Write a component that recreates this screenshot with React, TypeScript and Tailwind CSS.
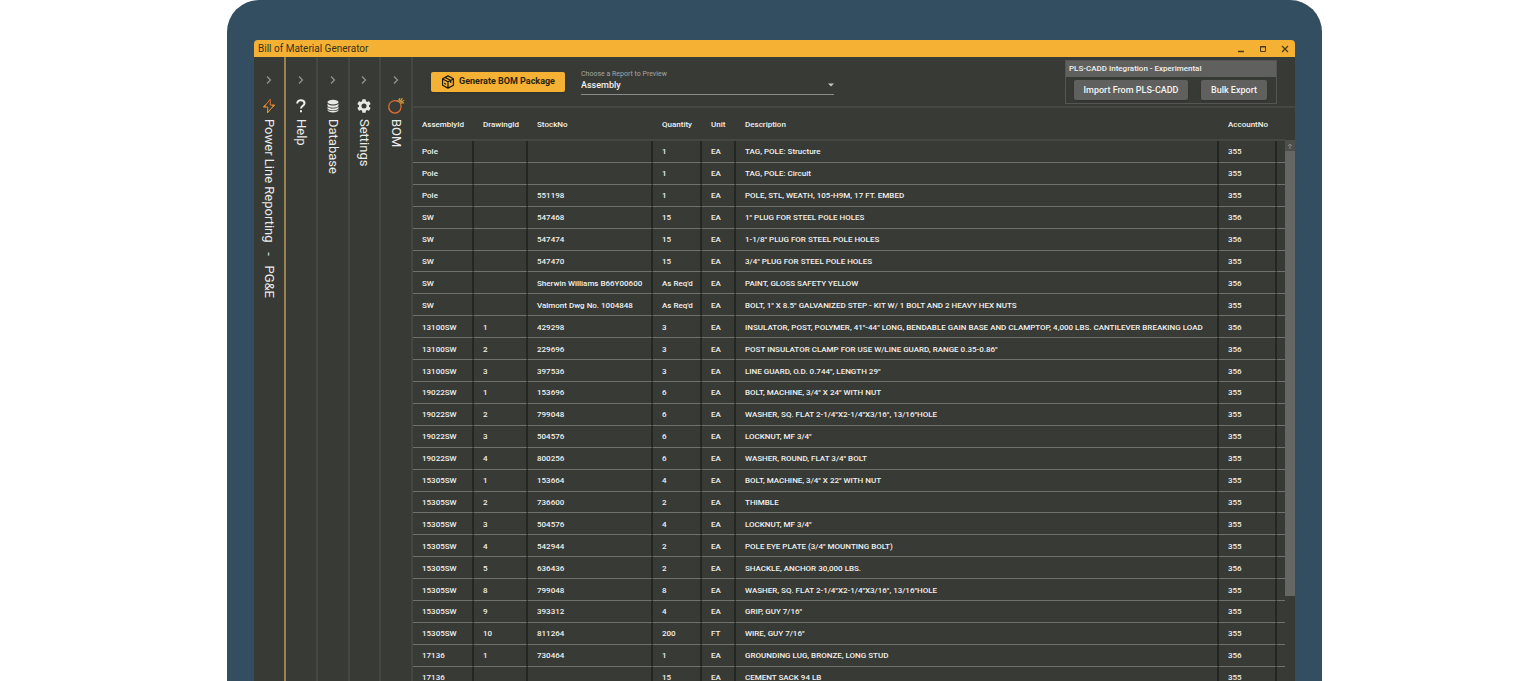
import type { ReactNode } from "react";

type Row = [string, string, string, string, string, string, string];

const columns = ["AssemblyId", "DrawingId", "StockNo", "Quantity", "Unit", "Description", "AccountNo"];

const rows: Row[] = [
  ["Pole", "", "", "1", "EA", "TAG, POLE: Structure", "355"],
  ["Pole", "", "", "1", "EA", "TAG, POLE: Circuit", "355"],
  ["Pole", "", "551198", "1", "EA", "POLE, STL, WEATH, 105-H9M, 17 FT. EMBED", "355"],
  ["SW", "", "547468", "15", "EA", "1\" PLUG FOR STEEL POLE HOLES", "356"],
  ["SW", "", "547474", "15", "EA", "1-1/8\" PLUG FOR STEEL POLE HOLES", "356"],
  ["SW", "", "547470", "15", "EA", "3/4\" PLUG FOR STEEL POLE HOLES", "355"],
  ["SW", "", "Sherwin Williams B66Y00600", "As Req'd", "EA", "PAINT, GLOSS SAFETY YELLOW", "356"],
  ["SW", "", "Valmont Dwg No. 1004848", "As Req'd", "EA", "BOLT, 1\" X 8.5\" GALVANIZED STEP - KIT W/ 1 BOLT AND 2 HEAVY HEX NUTS", "355"],
  ["13100SW", "1", "429298", "3", "EA", "INSULATOR, POST, POLYMER, 41\"-44\" LONG, BENDABLE GAIN BASE AND CLAMPTOP, 4,000 LBS. CANTILEVER BREAKING LOAD", "356"],
  ["13100SW", "2", "229696", "3", "EA", "POST INSULATOR CLAMP FOR USE W/LINE GUARD, RANGE 0.35-0.86\"", "356"],
  ["13100SW", "3", "397536", "3", "EA", "LINE GUARD, O.D. 0.744\", LENGTH 29\"", "356"],
  ["19022SW", "1", "153696", "6", "EA", "BOLT, MACHINE, 3/4\" X 24\" WITH NUT", "355"],
  ["19022SW", "2", "799048", "6", "EA", "WASHER, SQ. FLAT 2-1/4\"X2-1/4\"X3/16\", 13/16\"HOLE", "355"],
  ["19022SW", "3", "504576", "6", "EA", "LOCKNUT, MF 3/4\"", "355"],
  ["19022SW", "4", "800256", "6", "EA", "WASHER, ROUND, FLAT 3/4\" BOLT", "355"],
  ["15305SW", "1", "153664", "4", "EA", "BOLT, MACHINE, 3/4\" X 22\" WITH NUT", "355"],
  ["15305SW", "2", "736600", "2", "EA", "THIMBLE", "355"],
  ["15305SW", "3", "504576", "4", "EA", "LOCKNUT, MF 3/4\"", "355"],
  ["15305SW", "4", "542944", "2", "EA", "POLE EYE PLATE (3/4\" MOUNTING BOLT)", "355"],
  ["15305SW", "5", "636436", "2", "EA", "SHACKLE, ANCHOR 30,000 LBS.", "356"],
  ["15305SW", "8", "799048", "8", "EA", "WASHER, SQ. FLAT 2-1/4\"X2-1/4\"X3/16\", 13/16\"HOLE", "355"],
  ["15305SW", "9", "393312", "4", "EA", "GRIP, GUY 7/16\"", "355"],
  ["15305SW", "10", "811264", "200", "FT", "WIRE, GUY 7/16\"", "355"],
  ["17136", "1", "730464", "1", "EA", "GROUNDING LUG, BRONZE, LONG STUD", "356"],
  ["17136", "", "", "15", "EA", "CEMENT SACK 94 LB", "355"],
];

function BoltIcon() {
  return (
    <svg viewBox="0 0 14 16" className="h-4 w-3.5" fill="none" strokeWidth="1" strokeLinejoin="round">
      <defs>
        <linearGradient id="bolt" x1="0" y1="0" x2="0" y2="1">
          <stop offset="0" stopColor="#d9632c" />
          <stop offset="1" stopColor="#efaf35" />
        </linearGradient>
      </defs>
      <path d="M8.300 1.200 2.200 8.800 5.800 9 5.600 14.800 11.800 7.300 8.200 7Z" stroke="url(#bolt)" />
      <path d="M3.600 6.600 1.200 8.900H4M10 7.100H12.800L10.500 9.600" stroke="#e88a30" />
    </svg>
  );
}

function HelpIcon() {
  return (
    <svg viewBox="0 0 12 16" className="h-4 w-3" fill="none" stroke="#eeeeec" strokeWidth="2">
      <path d="M2.200 5.400C2.200 3.200 3.800 2.200 5.800 2.200S9.500 3.400 9.500 5.200C9.500 7.700 6 7.700 6 10.600" />
      <path d="M5 12.200h2v2H5z" fill="#eeeeec" stroke="none" />
    </svg>
  );
}

function DatabaseIcon() {
  return (
    <svg viewBox="0 0 14 16" className="h-4 w-3.5" fill="#e8e8e6">
      <ellipse cx="7" cy="4.100" rx="5.500" ry="2.300" />
      <path d="M1.500 5.500c1 1.600 3 2 5.500 2s4.500-.4 5.500-2v1.700C12.500 8.900 10 9.700 7 9.700S1.500 8.900 1.500 7.200Z" />
      <path d="M1.500 8.500c1 1.500 3 2 5.500 2s4.500-.5 5.500-2v1.500c0 1.700-2.500 2.400-5.500 2.400S1.500 11.700 1.500 10Z" />
      <path d="M1.500 11.200c1 1.500 3 1.900 5.500 1.900s4.500-.4 5.500-1.900v.9c0 1.700-2.500 2.400-5.500 2.400s-5.500-.7-5.500-2.400Z" />
    </svg>
  );
}

function GearIcon() {
  return (
    <svg viewBox="2 2 20 20" className="h-3.5 w-3.5" fill="#e8e8e6">
      <path d="M19.140 12.940c.040-.300.060-.610.060-.940 0-.320-.020-.640-.070-.940l2.030-1.580a.490.490 0 0 0 .120-.610l-1.920-3.320a.488.488 0 0 0-.590-.220l-2.390.960c-.500-.380-1.030-.700-1.620-.940l-.360-2.540a.484.484 0 0 0-.480-.410h-3.840c-.240 0-.430.170-.470.410l-.360 2.540c-.590.240-1.130.570-1.620.940l-2.390-.960a.480.480 0 0 0-.590.220L2.740 8.870c-.120.210-.080.470.120.610l2.030 1.580c-.050.300-.090.630-.090.940s.020.640.070.940l-2.030 1.580a.490.490 0 0 0-.120.610l1.920 3.320c.120.220.370.290.590.220l2.390-.960c.500.380 1.030.700 1.620.940l.360 2.540c.050.240.240.410.480.410h3.840c.240 0 .440-.170.470-.410l.360-2.540c.590-.240 1.130-.560 1.620-.940l2.390.960c.220.080.470 0 .590-.220l1.920-3.320a.480.480 0 0 0-.120-.610l-2.010-1.580ZM12 15.600A3.600 3.600 0 1 1 12 8.400a3.600 3.600 0 0 1 0 7.200Z" />
    </svg>
  );
}

function BombIcon() {
  return (
    <svg viewBox="0 0 18 18" className="h-[18px] w-[18px]" fill="none" strokeLinecap="round">
      <path d="M10.700 4.300A6.200 6.200 0 1 0 13.700 7.600" stroke="#dd6c31" strokeWidth="1.300" />
      <path d="M10.800 4 13.800 7 15.300 5.500 12.300 2.500Z" fill="#a57a33" stroke="#d99a36" strokeWidth="0.800" />
      <path d="M14 4 15.200 1.300M14.800 4.600 17 3.500M12.800 3V1.400M15.300 5.800 16.800 6" stroke="#e5ab35" strokeWidth="1" />
    </svg>
  );
}

function PackageIcon() {
  return (
    <svg viewBox="0 0 16 16" className="h-3.5 w-3.5 shrink-0" fill="none" stroke="#1d1a0d" strokeWidth="1.400" strokeLinejoin="round">
      <path d="M8 1 14.200 4.300V11.700L8 15 1.800 11.700V4.300ZM1.800 4.500 8 7.700 14.200 4.500M8 7.700V15M4.800 2.800 11.200 6.200V9M3.800 9.500 5.800 10.600" />
    </svg>
  );
}

function SideTab({ icon, label, active = false }: { icon: ReactNode; label: string; active?: boolean }) {
  return (
    <button
      type="button"
      className={
        active
          ? "flex h-full w-8 shrink-0 flex-col items-center border-r-2 border-[#9b8150] pt-[18px] text-[#ececea]"
          : "flex h-full min-w-0 flex-1 flex-col items-center border-r-2 border-[#454743] pt-[18px] text-[#ececea]"
      }
    >
      <svg viewBox="0 0 8 10" className="h-2.5 w-2" fill="none" stroke="#969794" strokeWidth="1.200">
        <path d="M2 1.500 5.500 5 2 8.500" />
      </svg>
      <span className="mt-3 flex h-[18px] items-center">{icon}</span>
      <span className="mt-1 text-[13px] leading-4 whitespace-pre [writing-mode:vertical-rl]">{label}</span>
    </button>
  );
}

function TitleBar() {
  return (
    <header className="flex h-[17px] shrink-0 items-center justify-between rounded-t-sm bg-[#f4b133] pr-[5px] pl-1">
      <h1 className="text-[10px] leading-[14px] text-[#3b321b]">Bill of Material Generator</h1>
      <div className="flex h-4 items-center gap-3 text-[#493a17]">
        <button type="button" aria-label="Minimize">
          <svg viewBox="0 0 10 10" className="h-2.5 w-2.5" stroke="currentColor" strokeWidth="1.500"><path d="M2 7.500h6" /></svg>
        </button>
        <button type="button" aria-label="Maximize">
          <svg viewBox="0 0 10 10" className="h-2.5 w-2.5" fill="none" stroke="currentColor"><path d="M2.500 2.500h5v5h-5zM2 3h6" /></svg>
        </button>
        <button type="button" aria-label="Close">
          <svg viewBox="0 0 10 10" className="h-2.5 w-2.5" stroke="currentColor" strokeWidth="1.200"><path d="m2 2 6 6M8 2 2 8" /></svg>
        </button>
      </div>
    </header>
  );
}

function Toolbar() {
  return (
    <div className="flex h-[51px] shrink-0 items-start border-b-2 border-[#454743] px-[18px]">
      <button
        type="button"
        className="mt-[15px] flex h-5 w-[134px] shrink-0 items-center justify-center gap-1 rounded-xs bg-[#f4b133] text-[9px] font-bold whitespace-nowrap text-[#29240f] shadow-sm"
      >
        <PackageIcon />
        Generate BOM Package
      </button>
      <div className="relative mt-3 ml-4 w-[253px]">
        <label htmlFor="report" className="block text-[7px] leading-[10px] text-[#a5a6a3]">Choose a Report to Preview</label>
        <select
          id="report"
          defaultValue="Assembly"
          className="block h-4 w-full appearance-none border-b border-[#8b8c89] bg-transparent pt-px pb-1 text-[9px] leading-[10px] font-medium text-[#f1f1ef]"
        >
          <option>Assembly</option>
        </select>
        <svg viewBox="0 0 6 4" className="pointer-events-none absolute right-0 bottom-2 h-1 w-1.5" fill="#c4c5c2"><path d="M0 .5h6L3 3.500Z" /></svg>
      </div>
      <section className="mt-[3px] ml-auto w-[212px] border border-[#555653]">
        <h2 className="h-4 bg-[#60605f] pl-[3px] text-[8px] leading-4 font-medium text-[#f1f1ef]">PLS-CADD Integration - Experimental</h2>
        <div className="flex h-[26px] items-start justify-between pt-[3px] pr-[9px] pl-2 text-[9px] font-medium text-[#f4f4f2]">
          <button type="button" className="h-5 w-[114px] rounded-xs bg-[#60605f] pt-px shadow-sm">Import From PLS-CADD</button>
          <button type="button" className="h-5 w-[66px] rounded-xs bg-[#60605f] pt-px shadow-sm">Bulk Export</button>
        </div>
      </section>
    </div>
  );
}

function BomTable() {
  return (
    <div className="flex min-h-0 flex-1 overflow-hidden">
      <table className="h-[581px] min-w-0 flex-1 table-fixed border-separate border-spacing-0 text-left text-[8px] leading-3 font-medium text-[#f1f1ef]">
        <colgroup>
          <col className="w-[61px]" />
          <col className="w-[54px]" />
          <col className="w-[125px]" />
          <col className="w-[49px]" />
          <col className="w-[34px]" />
          <col />
          <col className="w-[58px]" />
          <col className="w-2" />
        </colgroup>
        <thead>
          <tr>
            {columns.map((name) => (
              <th key={name} scope="col" className="h-[33px] border-b-2 border-[#454743] pt-0.5 pl-[9px] font-medium whitespace-nowrap">{name}</th>
            ))}
            <td className="border-b-2 border-[#454743]" />
          </tr>
        </thead>
        <tbody>
          {rows.map((row, index) => (
            <tr key={index}>
              {row.map((cell, column) => (
                <td key={column} className="overflow-hidden border-r-2 border-b border-r-[#242622] border-b-[#70716e] pt-0.5 pl-[9px] whitespace-nowrap">{cell}</td>
              ))}
              <td className="border-b border-[#70716e]" />
            </tr>
          ))}
        </tbody>
      </table>
      <div className="mt-8 flex w-2.5 shrink-0 flex-col">
        <div className="flex h-[11px] items-center justify-center bg-[#4e4f4c]">
          <svg viewBox="0 0 6 6" className="h-1.5 w-1.5" fill="none" stroke="#858683"><path d="M3 6V1M1 3l2-2 2 2" /></svg>
        </div>
        <div className="h-[445px] bg-[#666665]" />
      </div>
    </div>
  );
}

export default function App() {
  return (
    <div className="flex h-screen justify-center overflow-hidden bg-white pl-[13px] font-[Roboto,sans-serif]">
      <div className="flex h-full w-full max-w-[1095px] flex-col rounded-t-[32px] bg-[#344e61] px-[27px] pt-10">
        <div className="flex min-h-0 flex-1 flex-col">
          <TitleBar />
          <div className="flex min-h-0 flex-1 bg-[#383a35]">
            <nav className="flex w-[159px] shrink-0" aria-label="Panels">
              <SideTab active icon={<BoltIcon />} label="Power Line Reporting   -   PG&E" />
              <SideTab icon={<HelpIcon />} label="Help" />
              <SideTab icon={<DatabaseIcon />} label="Database" />
              <SideTab icon={<GearIcon />} label="Settings" />
              <SideTab icon={<BombIcon />} label="BOM" />
            </nav>
            <main className="flex min-w-0 flex-1 flex-col">
              <Toolbar />
              <BomTable />
            </main>
          </div>
        </div>
      </div>
    </div>
  );
}
